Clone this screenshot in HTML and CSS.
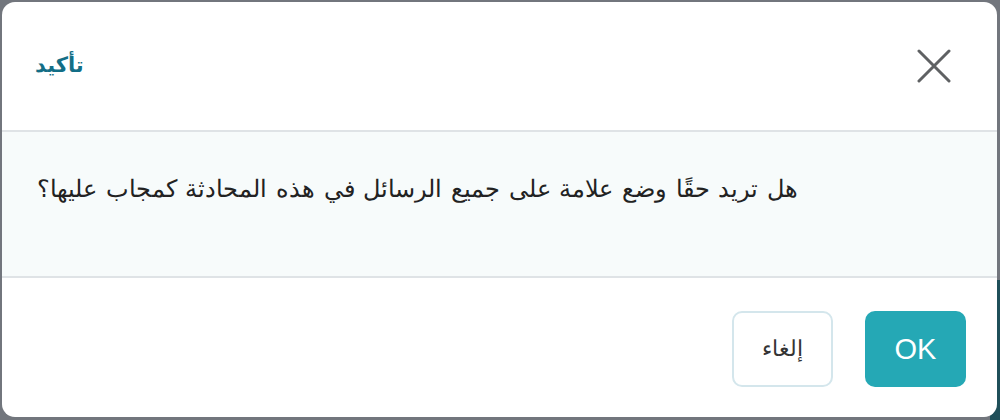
FILE: index.html
```html
<!DOCTYPE html>
<html lang="ar">
<head>
<meta charset="utf-8">
<link rel="stylesheet" href="styles.css">
</head>
<body>
<div class="backdrop">
  <div class="strip"></div>
  <div class="dialog">
    <div class="header">
      <h2 class="title">تأكيد</h2>
      <button class="close" aria-label="close">
        <svg width="34" height="34" viewBox="0 0 34 34"><path d="M2 2 L32 32 M32 2 L2 32" stroke="#5f6163" stroke-width="3" stroke-linecap="round" fill="none"/></svg>
      </button>
    </div>
    <div class="body">
      <p class="msg">هل تريد حقًا وضع علامة على جميع الرسائل في هذه المحادثة كمجاب عليها؟</p>
    </div>
    <div class="footer">
      <button class="btn cancel">إلغاء</button>
      <button class="btn ok">OK</button>
    </div>
  </div>
</div>
</body>
</html>
```
FILE: styles.css
```css
html, body {
  margin: 0;
  padding: 0;
  width: 1000px;
  height: 420px;
  overflow: hidden;
}
body {
  background: #72767d;
  font-family: "Liberation Sans", Arial, sans-serif;
}
.backdrop {
  position: relative;
  width: 1000px;
  height: 420px;
  box-sizing: border-box;
  padding: 2px 3px 3px 2px;
}
.strip {
  position: absolute;
  right: 0;
  bottom: 0;
  width: 10px;
  height: 140px;
  background: #1f4f59;
}
.dialog {
  position: relative;
  height: 415px;
  background: #fff;
  border-radius: 13px;
  display: flex;
  flex-direction: column;
  overflow: hidden;
}
.header {
  height: 128px;
  display: flex;
  align-items: center;
  justify-content: space-between;
  padding: 0 46px 0 33px;
  border-bottom: 2px solid #dfe3e6;
}
.title {
  margin: 0;
  font-family: "DejaVu Sans", sans-serif;
  font-size: 21px;
  font-weight: bold;
  color: #136e86;
  padding-bottom: 3px;
}
.close {
  background: none;
  border: 0;
  padding: 0;
  width: 34px;
  height: 34px;
  display: flex;
  cursor: pointer;
}
.body {
  height: 144px;
  background: #f7fbfb;
  border-bottom: 2px solid #dfe3e6;
  display: flex;
  align-items: center;
  padding: 0 33px;
}
.msg {
  margin: 0 0 0 2px;
  font-size: 24px;
  word-spacing: 2px;
  color: #222;
  padding-bottom: 30px;
}
.footer {
  flex: 1;
  display: flex;
  justify-content: flex-end;
  align-items: center;
  gap: 32px;
  padding: 0 31px 0 0;
}
.btn {
  width: 101px;
  height: 76px;
  border-radius: 10px;
  font-family: "Liberation Sans", Arial, sans-serif;
  box-sizing: border-box;
  margin-top: 3px;
}
.cancel {
  background: #fff;
  border: 2px solid #d4e6ec;
  color: #333;
  font-size: 22px;
}
.ok {
  background: #25a8b5;
  border: 0;
  color: #fff;
  font-size: 29px;
}
```
